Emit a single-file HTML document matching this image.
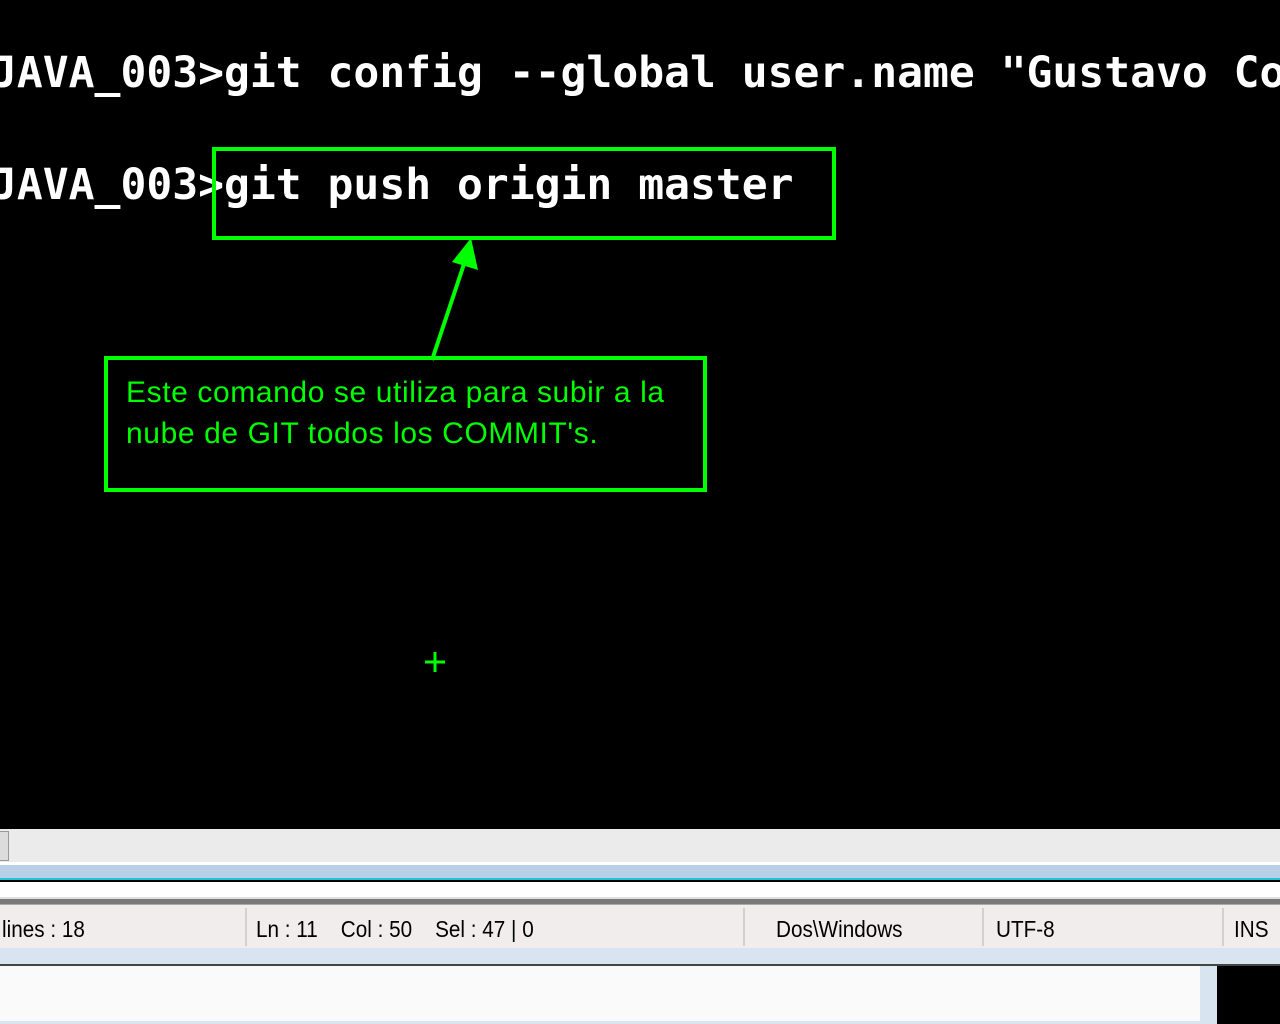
<!DOCTYPE html>
<html><head><style>
body{margin:0;width:1280px;height:1024px;overflow:hidden;background:#000;position:relative;font-family:"Liberation Sans",sans-serif}
.t{position:absolute;left:-9px;color:#fff;font-family:"DejaVu Sans Mono","Liberation Mono",monospace;font-weight:bold;font-size:43px;white-space:pre;line-height:50px}
.box{position:absolute;border:4px solid #00ff00;box-sizing:border-box}
.d{position:absolute;left:0;width:1280px}
.st{position:absolute;top:905px;height:43px;line-height:48px;font-size:23px;color:#000;font-family:"Liberation Sans",sans-serif;transform:scaleX(.9);transform-origin:left}
.sep{position:absolute;top:908px;height:38px;width:2px;background:#d4d0ce}
</style></head><body>
<div class="t" style="top:48px">JAVA_003&gt;git config --global user.name "Gustavo Co</div>
<div class="t" style="top:160px">JAVA_003&gt;git push origin master</div>
<div class="box" style="left:212px;top:147px;width:624px;height:93px"></div>
<div class="box" style="left:104px;top:356px;width:603px;height:136px"></div>
<div style="position:absolute;left:126px;top:372px;color:#00ff00;font-size:30px;line-height:41px;letter-spacing:0.6px;white-space:nowrap">Este comando se utiliza para subir a la<br>nube de GIT todos los COMMIT's.</div>
<svg style="position:absolute;left:0;top:0" width="1280" height="830">
<line x1="432" y1="360" x2="466" y2="258" stroke="#00ff00" stroke-width="4"/>
<polygon points="471,238 478,270 452,262" fill="#00ff00"/>
<path d="M435 652v20M425 662h20" stroke="#00ff00" stroke-width="3"/>
</svg>
<div class="d" style="top:829px;height:33px;background:#ebebeb"></div>
<div style="position:absolute;left:0;top:831px;width:8px;height:28px;background:#dcdcdc;border:1px solid #999;border-left:none"></div>
<div class="d" style="top:862px;height:3px;background:#fff"></div>
<div class="d" style="top:865px;height:13px;background:#b8cfe8"></div>
<div class="d" style="top:878px;height:2px;background:#22c4d8"></div>
<div class="d" style="top:880px;height:2px;background:#000"></div>
<div class="d" style="top:882px;height:15px;background:#fff"></div>
<div class="d" style="top:897px;height:2px;background:#e0e0e0"></div>
<div class="d" style="top:899px;height:6px;background:#7a7a7a;border-bottom:1px solid #aaa;box-sizing:border-box"></div>
<div class="d" style="top:905px;height:43px;background:#f0edec"></div>
<div class="sep" style="left:245px"></div><div class="sep" style="left:743px"></div><div class="sep" style="left:982px"></div><div class="sep" style="left:1222px"></div>
<div class="st" style="left:2px">lines : 18</div>
<div class="st" style="left:256px">Ln : 11 &nbsp;&nbsp; Col : 50 &nbsp;&nbsp; Sel : 47 | 0</div>
<div class="st" style="left:776px">Dos\Windows</div>
<div class="st" style="left:996px">UTF-8</div>
<div class="st" style="left:1234px">INS</div>
<div class="d" style="top:948px;height:16px;background:#d8e4f0"></div>
<div class="d" style="top:964px;height:2px;background:#444"></div>
<div class="d" style="top:966px;height:58px;background:#fafafa"></div>
<div style="position:absolute;left:1200px;top:966px;width:17px;height:58px;background:#d8e4f0"></div>
<div style="position:absolute;left:1217px;top:966px;width:63px;height:58px;background:#000"></div>
<div class="d" style="top:1021px;height:3px;background:#d8e4f0;width:1200px"></div>
</body></html>
